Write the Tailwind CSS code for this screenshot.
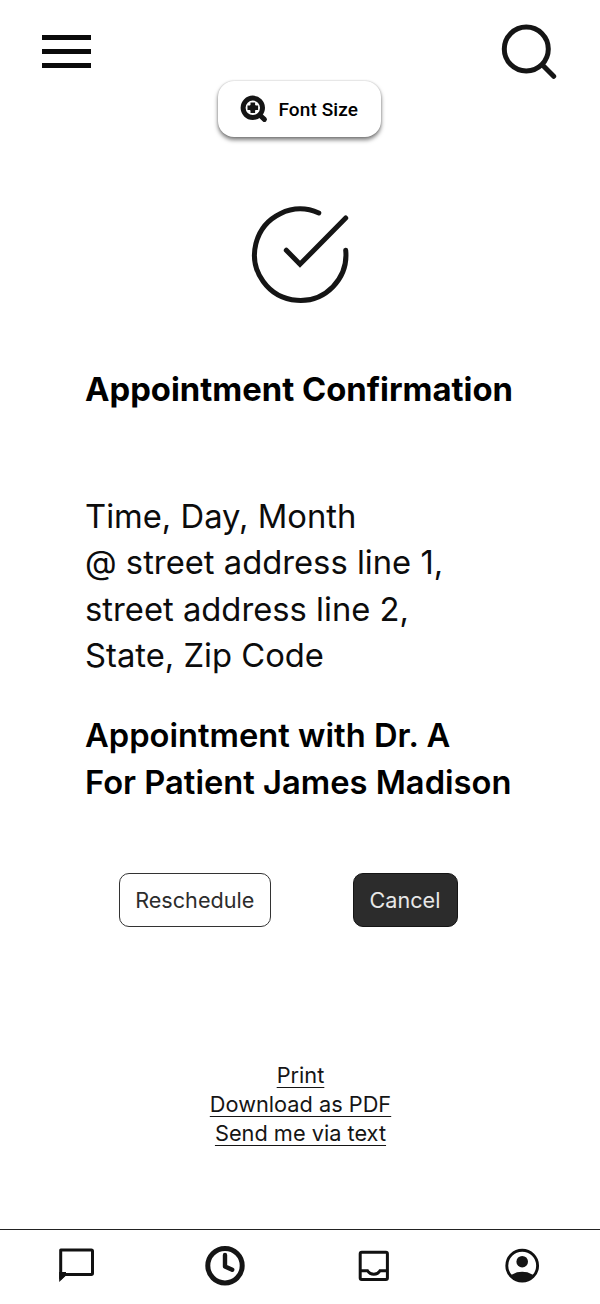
<!DOCTYPE html>
<html lang="en">
<head>
<meta charset="utf-8">
<title>Appointment Confirmation</title>
<script src="https://cdn.jsdelivr.net/npm/@tailwindcss/browser@4"></script>
</head>
<body class="bg-white">
<div class="w-[600px] h-[1304px] flex flex-col overflow-hidden bg-white text-black font-['Inter',sans-serif]">
  <header class="h-[81px] shrink-0 flex justify-between items-start pl-[42px] pr-[43px] pt-6">
    <button aria-label="Menu" class="mt-[11px] w-[50px] h-[33px] flex flex-col justify-between">
      <span class="w-[49px] h-[5px] bg-[#0a0a0a]"></span>
      <span class="w-[49px] h-[5px] bg-[#0a0a0a]"></span>
      <span class="w-[49px] h-[5px] bg-[#0a0a0a]"></span>
    </button>
    <button aria-label="Search">
      <svg class="block" width="56" height="56" viewBox="501 24 56 56" fill="none" stroke="#151515" stroke-linecap="round">
        <circle cx="526.3" cy="49" r="22" stroke-width="5"/>
        <path d="M543 65.5 553.7 76.3" stroke-width="5"/>
      </svg>
    </button>
  </header>
  <button class="ml-[218px] w-[163px] h-14 shrink-0 flex items-center pl-[22px] rounded-2xl bg-white shadow-[0_3px_4px_rgba(0,0,0,0.5),0_0_2px_rgba(0,0,0,0.25)] font-['Roboto',sans-serif] font-medium text-[19px]">
    <svg class="block shrink-0" width="28" height="28" viewBox="240 95 28 28" fill="none" stroke="#151515">
      <circle cx="252.8" cy="107.8" r="9.7" stroke-width="5"/>
      <path d="M260 115.2 264.4 119.4" stroke-width="5" stroke-linecap="round"/>
      <path d="M252.8 102.5V113.1M247.5 107.8H258.1" stroke-width="4.6"/>
      <path d="M252.8 104.3 256.3 107.8 252.8 111.3 249.3 107.8Z" fill="#151515" stroke-width="2"/>
    </svg>
    <span class="ml-[10.5px] mt-[2px] whitespace-nowrap tracking-[0.1px]">Font Size</span>
  </button>
  <svg class="block mx-auto mt-[66px] shrink-0 overflow-visible" width="100" height="100" viewBox="250 203 100 100" fill="none" stroke="#151515" stroke-width="5" stroke-linecap="round" stroke-linejoin="miter">
    <path d="M318.8 213A45.7 45.7 0 1 0 345.7 250.2"/>
    <path d="M286.3 250.2 300 264.3 345.7 218"/>
  </svg>
  <main class="pl-[85px] text-[32.8px] leading-[46.4px] whitespace-nowrap">
    <h1 class="mt-[62.8px] font-bold">Appointment Confirmation</h1>
    <p class="mt-[80.5px] font-normal text-[32.75px] text-[#0c0c0c]">Time, Day, Month<br>@ street address line 1,<br>street address line 2,<br>State, Zip Code</p>
    <p class="mt-[33.8px] font-semibold text-[32.7px]">Appointment with Dr. A<br>For Patient James Madison</p>
  </main>
  <div class="mt-[68.3px] ml-[118.5px] flex gap-[82px] text-[21.6px]">
    <button class="w-[152.5px] h-[54px] shrink-0 rounded-[10px] border border-[#333] text-[#2c2c2c]">Reschedule</button>
    <button class="w-[105px] h-[54px] shrink-0 rounded-[10px] border border-[#151515] bg-[#2c2c2c] text-[#e8e8e8] pr-[1px]">Cancel</button>
  </div>
  <nav class="mt-[133.7px] pl-[1px] flex flex-col items-center text-[21.75px] leading-[28.8px] text-[#151515]">
    <a class="underline decoration-[1.4px] underline-offset-[4px] [text-decoration-skip-ink:none]">Print</a>
    <a class="underline decoration-[1.4px] underline-offset-[4px] [text-decoration-skip-ink:none]">Download as PDF</a>
    <a class="underline decoration-[1.4px] underline-offset-[4px] [text-decoration-skip-ink:none]">Send me via text</a>
  </nav>
  <footer class="mt-auto h-[75px] shrink-0 border-t border-[#222] flex items-start pl-[57px] pt-[14px]">
    <svg class="block" width="40" height="44" viewBox="57 1244 40 44" fill="none" stroke="#111" stroke-width="3">
      <path d="M60.7 1250H91.3Q92.5 1250 92.5 1251.2V1273.3Q92.5 1274.5 91.3 1274.5H64.5L60.7 1278.2Z" stroke-linejoin="round"/>
      <path d="M59.2 1272V1282L66 1275.5V1272Z" fill="#111" stroke="none"/>
    </svg>
    <svg class="block ml-[107px]" width="42" height="44" viewBox="204 1244 42 44" fill="none" stroke="#151515">
      <circle cx="225" cy="1265.7" r="17.2" stroke-width="5"/>
      <path d="M225 1255V1266.4L232.2 1269.8" stroke-width="4.4" stroke-linecap="round" stroke-linejoin="round"/>
    </svg>
    <svg class="block ml-[110px]" width="36" height="44" viewBox="356 1244 36 44" fill="none" stroke="#111" stroke-width="3">
      <rect x="360.2" y="1252.2" width="27.2" height="27.2" rx="1.5"/>
      <path d="M360.2 1270.8H367.5C369 1273.2 371 1274.3 373.8 1274.3S378.6 1273.2 380 1270.8H387.4"/>
    </svg>
    <svg class="block ml-[111px]" width="38" height="44" viewBox="503 1244 38 44">
      <defs><clipPath id="disc"><circle cx="522.2" cy="1265.7" r="16"/></clipPath></defs>
      <circle cx="522.2" cy="1265.7" r="15.4" fill="none" stroke="#111" stroke-width="2.9"/>
      <circle cx="522.2" cy="1261.7" r="5.8" fill="#151515"/>
      <ellipse cx="522.2" cy="1280" rx="13.5" ry="8.2" fill="#151515" clip-path="url(#disc)"/>
    </svg>
  </footer>
</div>
</body>
</html>
